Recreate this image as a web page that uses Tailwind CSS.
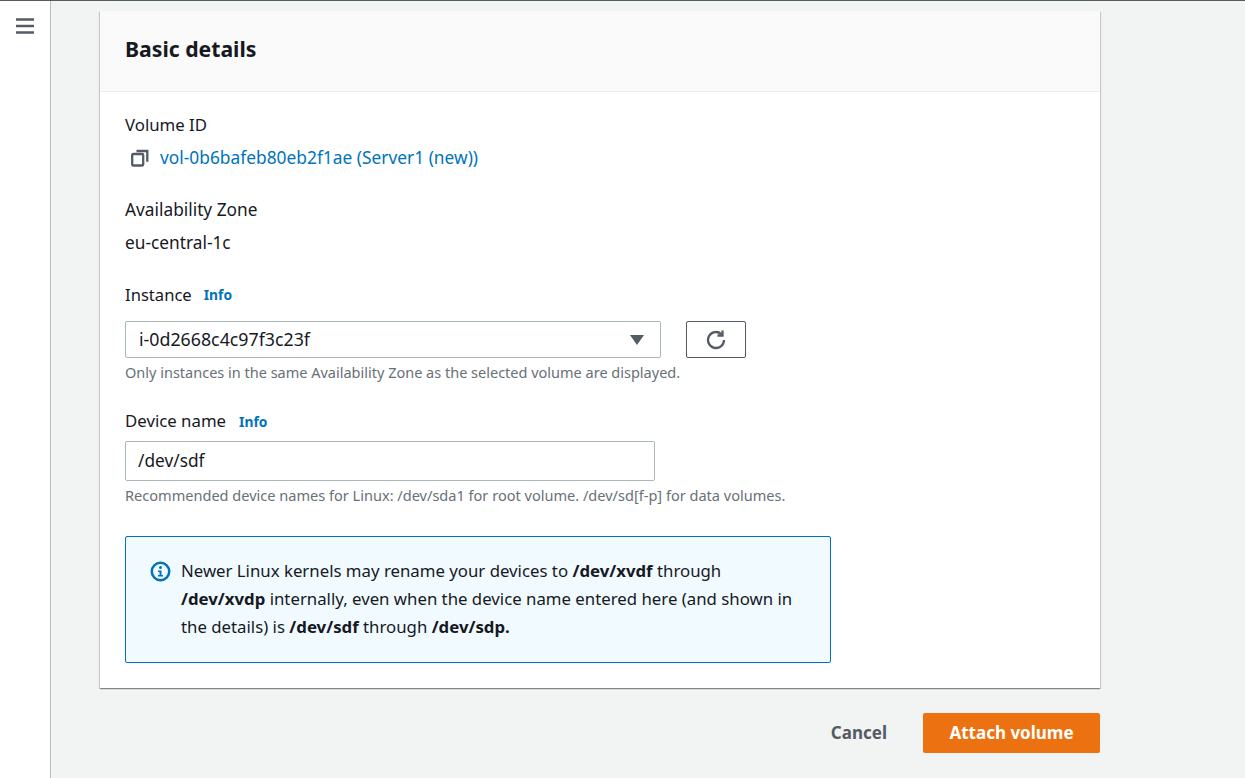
<!DOCTYPE html>
<html>
<head>
    <meta charset="utf-8" />
    <title>Attach volume</title>
    <script src="https://cdn.jsdelivr.net/npm/@tailwindcss/browser@4"></script>
</head>
<body class="h-[778px] overflow-hidden bg-[#f2f3f3] font-['Noto_Sans',sans-serif] text-[#16191f]">

<div class="h-px bg-[#545b64]"></div>
<div class="flex h-[777px]">
    <!-- Side rail -->
    <div class="w-[51px] shrink-0 bg-white border-r border-[#b9bdbd] pt-[17px] pl-4">
        <svg width="18" height="16" viewBox="0 0 18 16" class="block">
            <path d="M0 1.500h18M0 8h18M0 14.500h18" stroke="#545b64" stroke-width="2.500" />
        </svg>
    </div>

    <!-- Main -->
    <div class="flex-1 pl-[49px] pt-[10px] pr-[145px]">
        <div class="bg-white shadow-[0_1px_1px_0_rgba(0,28,36,0.3),1px_1px_1px_0_rgba(0,28,36,0.15),-1px_1px_1px_0_rgba(0,28,36,0.15)]">
            <div class="h-[81px] bg-[#fafafa] border-b border-[#eaeded] flex items-center px-[25px] pb-[4px]">
                <h2 class="text-[21.200px] font-bold leading-[26px] text-[#16191f]">Basic details</h2>
            </div>

            <div class="pl-[25px] pt-[21px] h-[596px]">
                <div class="text-[16.800px] leading-[24px]">Volume ID</div>
                <div class="flex items-center h-[24px] mt-[8px] pl-[6px] gap-[11px]">
                    <svg width="18" height="18" viewBox="0 0 18 18" fill="none" stroke="#545b64" stroke-width="2.300" class="shrink-0 mt-[1px]">
                        <rect x="1.200" y="5" width="11" height="11.500" rx="1" />
                        <path d="M5.500 2h10.800v10.800" />
                    </svg>
                    <a class="text-[17.350px] text-[#0073bb]">vol-0b6bafeb80eb2f1ae (Server1 (new))</a>
                </div>

                <div class="text-[17.300px] leading-[24px] mt-[29px]">Availability Zone</div>
                <div class="text-[17.300px] leading-[24px] mt-[9px]">eu-central-1c</div>

                <div class="flex items-center gap-[12px] h-[24px] mt-[28px]">
                    <span class="text-[16.600px]">Instance</span>
                    <a class="text-[13.800px] font-bold text-[#0073bb] mt-[1px]">Info</a>
                </div>
                <div class="flex gap-[25px] mt-[14px]">
                    <div class="w-[536px] h-[37px] border border-[#aab7b8] rounded-[2px] flex items-center justify-between pl-[13px] pr-[16px]">
                        <span class="text-[17.800px]">i-0d2668c4c97f3c23f</span>
                        <svg width="14" height="10" viewBox="0 0 14 10"><path d="M0 0h14l-7 10z" fill="#545b64" /></svg>
                    </div>
                    <button class="w-[60px] h-[37px] border border-[#545b64] rounded-[2px] flex items-center justify-center">
                        <svg width="22" height="22" viewBox="0 0 22 22" fill="none" stroke="#545b64" stroke-width="2.300">
                            <path d="M19 11a8 8 0 1 1-2.700-6" />
                            <path d="M17.500 1.500v5h-5" />
                        </svg>
                    </button>
                </div>
                <div class="text-[14.500px] leading-[18px] text-[#687078] mt-[5px]">Only instances in the same Availability Zone as the selected volume are displayed.</div>

                <div class="flex items-center gap-[13px] h-[24px] mt-[28px]">
                    <span class="text-[16.800px]">Device name</span>
                    <a class="text-[13.800px] font-bold text-[#0073bb] mt-[2px]">Info</a>
                </div>
                <div class="w-[530px] h-[40px] border border-[#aab7b8] rounded-[2px] flex items-center pl-[12px] mt-[8px] text-[17.300px]">/dev/sdf</div>
                <div class="text-[14.550px] leading-[18px] text-[#687078] mt-[5px]">Recommended device names for Linux: /dev/sda1 for root volume. /dev/sd[f-p] for data volumes.</div>

                <div class="w-[706px] h-[127px] mt-[32px] border border-[#0073bb] rounded-[2px] bg-[#f1faff] flex pl-[24px] pt-[20px] pr-[25px] gap-[10px]">
                    <svg width="21" height="21" viewBox="0 0 21 21" class="shrink-0 mt-[4px]">
                        <circle cx="10.500" cy="10.500" r="8.750" fill="none" stroke="#0073bb" stroke-width="2.500" />
                        <circle cx="10.500" cy="6.500" r="1.500" fill="#0073bb" />
                        <path d="M8 9.500h3.500v4.500h1.500v1.500h-5v-1.500h1.500v-3h-1.500z" fill="#0073bb" />
                    </svg>
                    <p class="text-[16.800px] leading-[28px]">Newer Linux kernels may rename your devices to <b>/dev/xvdf</b> through <b>/dev/xvdp</b> internally, even when the device name entered here (and shown in the details) is <b>/dev/sdf</b> through <b>/dev/sdp.</b></p>
                </div>
            </div>
        </div>

        <!-- Actions -->
        <div class="flex justify-end items-center mt-[25px] gap-[36px]">
            <button class="text-[17px] font-bold text-[#545b64]">Cancel</button>
            <button class="w-[177px] h-[40px] bg-[#ec7211] rounded-[2px] text-[17px] font-bold text-white">Attach volume</button>
        </div>
    </div>
</div>

</body>
</html>
